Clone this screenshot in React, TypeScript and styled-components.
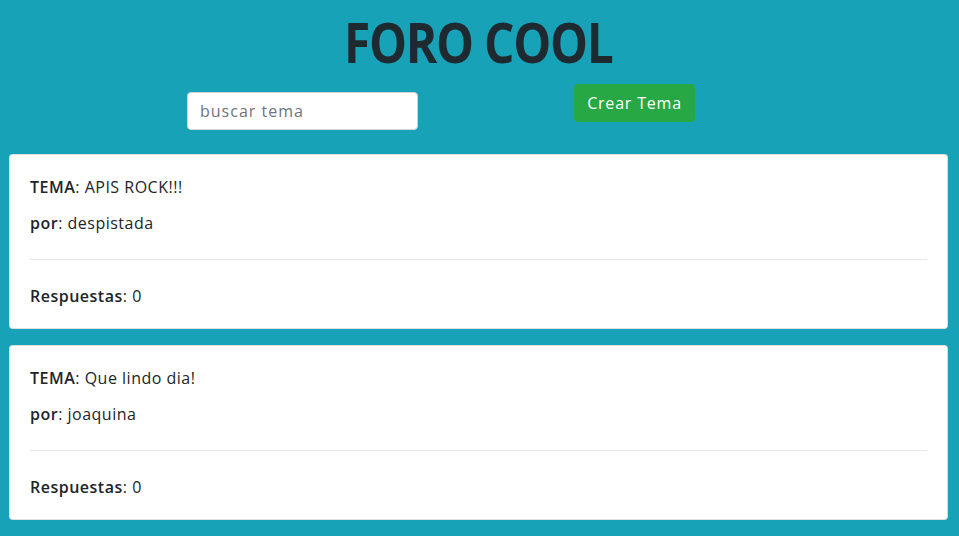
import React from "react";
import styled, { createGlobalStyle } from "styled-components";

const GlobalStyle = createGlobalStyle`
  html, body {
    margin: 0;
    padding: 0;
    background: #17a2b8;
  }
  body {
    font-family: "Open Sans", "Liberation Sans", sans-serif;
    color: #212529;
  }
  * {
    box-sizing: border-box;
  }
`;

const Page = styled.div`
  width: 959px;
  min-height: 536px;
  background: #17a2b8;
  padding: 0 11px 16px 9px;
`;

const Title = styled.h1`
  margin: 0;
  padding-top: 4px;
  height: 84px;
  text-align: center;
  font-family: "Open Sans", "Liberation Sans", sans-serif;
  font-weight: 700;
  font-size: 55px;
  line-height: 76px;
  color: #1f2a30;
  letter-spacing: -1.5px;
`;

const TitleText = styled.span`
  display: inline-block;
  transform: scaleX(0.87);
`;

const Toolbar = styled.div`
  display: grid;
  grid-template-columns: 231px 121px;
  column-gap: 156px;
  padding-left: 178px;
  height: 70px;
`;

const Search = styled.input`
  margin-top: 8px;
  height: 38px;
  width: 231px;
  border: 1px solid #ced4da;
  border-radius: 4px;
  padding: 6px 12px;
  font-family: "Open Sans", "Liberation Sans", sans-serif;
  font-size: 16px;
  letter-spacing: 1px;
  color: #495057;
  background: #fff;
  outline: none;
  &::placeholder {
    color: #6c757d;
  }
`;

const Button = styled.button`
  height: 38px;
  width: 121px;
  border: 1px solid #28a745;
  border-radius: 4px;
  background: #28a745;
  color: #fff;
  font-family: "Open Sans", "Liberation Sans", sans-serif;
  font-size: 16px;
  letter-spacing: 0.8px;
  padding: 0;
  cursor: pointer;
`;

const List = styled.div`
  display: flex;
  flex-direction: column;
  gap: 16px;
`;

const Card = styled.div`
  background: #fff;
  border: 1px solid rgba(0, 0, 0, 0.125);
  border-radius: 4px;
  padding: 20px;
`;

const Line = styled.p<{ $last?: boolean }>`
  margin: 0 0 ${({ $last }) => ($last ? "0" : "12px")};
  font-size: 16px;
  line-height: 24px;
  font-weight: 400;
  letter-spacing: 0.5px;
  b {
    font-weight: 600;
  }
`;

const Divider = styled.hr`
  margin: 24px 0 24px;
  border: 0;
  border-top: 1px solid rgba(0, 0, 0, 0.1);
`;

const topics = [
  { title: "APIS ROCK!!!", author: "despistada", replies: 0 },
  { title: "Que lindo dia!", author: "joaquina", replies: 0 },
];

export default function App() {
  return (
    <Page>
      <GlobalStyle />
      <Title>
        <TitleText>FORO COOL</TitleText>
      </Title>
      <Toolbar>
        <Search placeholder="buscar tema" />
        <Button>Crear Tema</Button>
      </Toolbar>
      <List>
        {topics.map((t) => (
          <Card key={t.title}>
            <Line>
              <b>TEMA</b>: {t.title}
            </Line>
            <Line $last>
              <b>por</b>: {t.author}
            </Line>
            <Divider />
            <Line $last>
              <b>Respuestas</b>: {t.replies}
            </Line>
          </Card>
        ))}
      </List>
    </Page>
  );
}
